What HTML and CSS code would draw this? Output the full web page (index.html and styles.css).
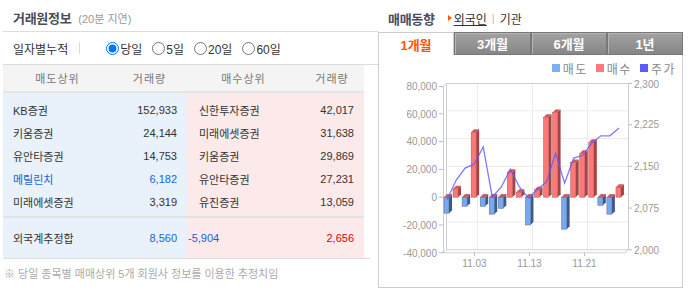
FILE: index.html
```html
<!DOCTYPE html>
<html lang="ko">
<head>
    <meta charset="UTF-8">
    <meta name="viewport" content="width=device-width, initial-scale=1.0">
    <title>거래원정보 · 매매동향</title>
    <link rel="stylesheet" href="styles.css">
</head>
<body>
    <div class="wrap">
        <div class="trade">
            <div class="panel-head">
                <h2>거래원정보</h2>
                <span class="delay">(20분 지연)</span>
            </div>

            <div class="filter">
                <span class="filter-label">일자별누적</span>
                <span class="divider"></span>
                <div class="options">
                    <label class="opt"><input type="radio" name="period" checked>당일</label>
                    <label class="opt"><input type="radio" name="period">5일</label>
                    <label class="opt"><input type="radio" name="period">20일</label>
                    <label class="opt"><input type="radio" name="period">60일</label>
                </div>
            </div>

            <div class="board">
                <div class="board-head">
                    <span>매도상위</span>
                    <span>거래량</span>
                    <span>매수상위</span>
                    <span>거래량</span>
                </div>

                <div class="board-body">
                    <div class="half sell">
                        <span class="name">KB증권</span><span class="num">152,933</span>
                        <span class="name">키움증권</span><span class="num">24,144</span>
                        <span class="name">유안타증권</span><span class="num">14,753</span>
                        <span class="name blue">메릴린치</span><span class="num blue">6,182</span>
                        <span class="name">미래에셋증권</span><span class="num">3,319</span>
                    </div>
                    <div class="half buy">
                        <span class="name">신한투자증권</span><span class="num">42,017</span>
                        <span class="name">미래에셋증권</span><span class="num">31,638</span>
                        <span class="name">키움증권</span><span class="num">29,869</span>
                        <span class="name">유안타증권</span><span class="num">27,231</span>
                        <span class="name">유진증권</span><span class="num">13,059</span>
                    </div>
                </div>

                <div class="board-total">
                    <div class="half sell">
                        <span class="name">외국계추정합</span><span class="num blue">8,560</span>
                    </div>
                    <div class="half buy">
                        <span class="name net blue">-5,904</span><span class="num red">2,656</span>
                    </div>
                </div>
            </div>

            <p class="note">※ 당일 종목별 매매상위 5개 회원사 정보를 이용한 추정치임</p>
        </div>

        <div class="trend">
            <div class="trend-head">
                <h2>매매동향</h2>
                <span class="arrow"></span>
                <a class="sub on" href="#">외국인</a>
                <span class="sep">|</span>
                <a class="sub" href="#">기관</a>
            </div>

            <div class="chart-box">
                <div class="tabs">
                    <span class="tab on">1개월</span>
                    <span class="tab wide">3개월</span>
                    <span class="tab">6개월</span>
                    <span class="tab">1년</span>
                </div>

                <div class="legend">
                    <span class="key"><i class="sq sell-sq"></i>매도</span>
                    <span class="key"><i class="sq buy-sq"></i>매수</span>
                    <span class="key"><i class="sq price-sq"></i>주가</span>
                </div>

                <svg class="chart" viewBox="379 81 303 206" width="303" height="206">
                    <!-- back wall -->
                    <g stroke="#ebebeb" stroke-width="1">
                        <line x1="446.5" y1="110.8" x2="628" y2="110.8"/>
                        <line x1="446.5" y1="138.6" x2="628" y2="138.6"/>
                        <line x1="446.5" y1="166.4" x2="628" y2="166.4"/>
                        <line x1="446.5" y1="194.2" x2="628" y2="194.2"/>
                        <line x1="446.5" y1="222" x2="628" y2="222"/>
                        <line x1="477.5" y1="83" x2="477.5" y2="249.8"/>
                        <line x1="532.5" y1="83" x2="532.5" y2="249.8"/>
                        <line x1="587.5" y1="83" x2="587.5" y2="249.8"/>
                    </g>
                    <g stroke="#cfcfcf" stroke-width="1" fill="none">
                        <polyline points="446.5,249.8 446.5,83.5 628,83.5"/>
                        <line x1="628.5" y1="83" x2="628.5" y2="250"/>
                        <line x1="446.5" y1="249.8" x2="628" y2="249.8"/>
                        <polyline points="446.5,83.5 443.5,86.5 443.5,252.8 625,252.8 628.5,249.8"/>
                        <line x1="446.5" y1="249.8" x2="443.5" y2="252.8"/>
                    </g>

                    <!-- axes -->
                    <g stroke="#bbb" stroke-width="1">
                        <line x1="439" y1="86.5" x2="443.5" y2="86.5"/>
                        <line x1="439" y1="113.8" x2="443.5" y2="113.8"/>
                        <line x1="439" y1="141.6" x2="443.5" y2="141.6"/>
                        <line x1="439" y1="169.4" x2="443.5" y2="169.4"/>
                        <line x1="439" y1="197.2" x2="443.5" y2="197.2"/>
                        <line x1="439" y1="225" x2="443.5" y2="225"/>
                        <line x1="439" y1="252.8" x2="443.5" y2="252.8"/>
                        <line x1="628.5" y1="83.5" x2="632" y2="83.5"/>
                        <line x1="628.5" y1="124.7" x2="632" y2="124.7"/>
                        <line x1="628.5" y1="166.4" x2="632" y2="166.4"/>
                        <line x1="628.5" y1="208.1" x2="632" y2="208.1"/>
                        <line x1="628.5" y1="249.8" x2="632" y2="249.8"/>
                        <line x1="474.5" y1="252.8" x2="474.5" y2="256"/>
                        <line x1="529.5" y1="252.8" x2="529.5" y2="256"/>
                        <line x1="584.5" y1="252.8" x2="584.5" y2="256"/>
                    </g>
                    <g class="axis-text" text-anchor="end">
                        <text x="437" y="90">80,000</text>
                        <text x="437" y="117.5">60,000</text>
                        <text x="437" y="145.3">40,000</text>
                        <text x="437" y="173">20,000</text>
                        <text x="437" y="201">0</text>
                        <text x="437" y="228.7">-20,000</text>
                        <text x="437" y="256.5">-40,000</text>
                    </g>
                    <g class="axis-text">
                        <text x="634" y="87.5">2,300</text>
                        <text x="634" y="128.4">2,225</text>
                        <text x="634" y="170">2,150</text>
                        <text x="634" y="211.8">2,075</text>
                        <text x="634" y="253.5">2,000</text>
                    </g>
                    <g class="axis-text" text-anchor="middle">
                        <text x="474.5" y="267">11.03</text>
                        <text x="529.5" y="267">11.13</text>
                        <text x="584.5" y="267">11.21</text>
                    </g>
                    <g id="bars"></g>
                    <polyline id="price" fill="none" stroke="#5a5aff" stroke-opacity="0.8" stroke-width="1.3"/>
                </svg>
            </div>
        </div>
    </div>

    <script>
        // 일별 순매수(천주)와 주가
        const net = [-11.5, 6, -6.5, 46.8, -6.5, -12.2, -8, 18, 3.6, -20,
                     5.3, 57.5, 61, -23, 25, 31.6, 39.5, -5.8, -12.2, 7.2];
        const price = [2090, 2125, 2147, 2154, 2185, 2095, 2113, 2145, 2113, 2093,
                       2109, 2122, 2174, 2120, 2165, 2170, 2192, 2205, 2205, 2219];

        const NS = 'http://www.w3.org/2000/svg';
        const bars = document.getElementById('bars');
        const zeroY = 197.2;
        const unit = 1.39;
        const RED = ['#ff7878', '#a04444', '#d35757', '#b84c4c'];
        const BLUE = ['#79a9ec', '#3e5b88', '#5d83c2', '#4a6a9c'];

        function add(tag, attrs) {
            const el = document.createElementNS(NS, tag);
            for (const k in attrs) el.setAttribute(k, attrs[k]);
            bars.appendChild(el);
            return el;
        }

        function cap(x, y, c) {
            add('polygon', { points: `${x},${y} ${x + 3},${y - 3} ${x + 8},${y - 3} ${x + 5},${y}`, fill: c[2] });
        }

        function bar(x, top, bottom, c) {
            add('polygon', { points: `${x + 5},${top} ${x + 8},${top - 3} ${x + 8},${bottom - 3} ${x + 5},${bottom}`, fill: c[1] });
            add('rect', { x: x, y: top, width: 5, height: bottom - top, fill: c[0], stroke: c[3], 'stroke-width': 0.5 });
            cap(x, top, c);
        }

        const pts = [];
        net.forEach((v, i) => {
            const x = 444 + i * 9.05;
            const y = zeroY - v * unit;
            if (v >= 0) {
                bar(x, y, zeroY, RED);
            } else {
                bar(x, zeroY, y, BLUE);
                cap(x, zeroY, RED);
            }
            const py = 249.8 - (price[i] - 2000) / 300 * 166.8;
            pts.push(`${(x + 3).toFixed(1)},${py.toFixed(1)}`);
        });
        document.getElementById('price').setAttribute('points', pts.join(' '));
    </script>
</body>
</html>
```

FILE: styles.css
```css
* {
    margin: 0;
    padding: 0;
    box-sizing: border-box;
}

body {
    font-family: "Liberation Sans", "Noto Sans CJK KR", sans-serif;
    font-size: 11px;
    color: #333;
    background: #fff;
}

.wrap {
    display: flex;
    width: 694px;
    height: 295px;
}

/* 거래원정보 */
.trade {
    width: 375px;
    margin-left: 3px;
}

.panel-head {
    height: 32px;
    border-bottom: 1px solid #ddd;
    display: flex;
    align-items: center;
    padding: 4px 0 0 10px;
}

.panel-head h2,
.trend-head h2 {
    font-size: 13px;
    font-weight: bold;
    color: #4b4b5c;
    letter-spacing: -0.3px;
}

.delay {
    font-size: 11px;
    color: #999;
    margin-left: 7px;
}

.filter {
    height: 33px;
    border-bottom: 1px solid #ddd;
    display: flex;
    align-items: center;
    padding-left: 10px;
    font-size: 12px;
    color: #333;
}

.divider {
    width: 1px;
    height: 12px;
    background: #ddd;
    margin-left: 11px;
}

.options {
    display: flex;
    align-items: center;
    gap: 10px;
    margin-left: 26px;
}

.opt {
    display: flex;
    align-items: center;
    gap: 1px;
}

.opt input {
    width: 13px;
    height: 13px;
    margin: 0;
}

.board {
    width: 361px;
}

.board-head {
    display: grid;
    grid-template-columns: 109px 75px 113px 64px;
    height: 28px;
    background: #f4f4f4;
    border-bottom: 2px solid #e6e6e6;
    color: #777;
    letter-spacing: 1px;
    font-size: 11px;
}

.board-head span {
    display: flex;
    align-items: center;
    justify-content: center;
}

.board-body,
.board-total {
    display: flex;
}

.board-body {
    border-bottom: 2px solid #e2e2e2;
}

.half {
    display: grid;
    grid-auto-rows: 23px;
    align-items: center;
}

.board-body .half {
    padding: 5px 0 3px;
}

.board-total .half {
    grid-auto-rows: 40px;
}

.sell {
    width: 184px;
    grid-template-columns: 109px 75px;
    background: #e9f1fb;
}

.buy {
    width: 177px;
    grid-template-columns: 113px 64px;
    background: #fbeae9;
}

.sell .name {
    padding-left: 10px;
}

.buy .name {
    padding-left: 12px;
}

.buy .name.net {
    padding-left: 1px;
}

.num {
    text-align: right;
    padding-right: 10px;
}

.blue {
    color: #1863d6;
}

.red {
    color: #e00000;
}

.note {
    width: 367px;
    border-top: 1px solid #ddd;
    padding: 9px 0 0 1px;
    color: #aaa;
    font-size: 11px;
    line-height: 13px;
}

/* 매매동향 */
.trend {
    width: 305px;
}

.trend-head {
    height: 32px;
    display: flex;
    align-items: center;
    padding: 4px 0 0 10px;
}

.arrow {
    width: 0;
    height: 0;
    border-left: 4px solid #ff5a00;
    border-top: 3px solid transparent;
    border-bottom: 3px solid transparent;
    margin-left: 13px;
}

.sub {
    font-size: 12px;
    color: #333;
    text-decoration: none;
}

.sub.on {
    margin-left: 2px;
    text-decoration: underline;
}

.sep {
    color: #bbb;
    margin: 0 5px;
}

.chart-box {
    height: 256px;
    border: 1px solid #ccc;
    border-top: 0;
}

.tabs {
    display: flex;
    height: 23px;
    margin: 0 -1px;
}

.tab {
    width: 76px;
    height: 23px;
    display: flex;
    align-items: center;
    justify-content: center;
    font-size: 13px;
    font-weight: bold;
    color: #fff;
    background: linear-gradient(#a2a2a2, #868686);
    border: 1px solid #777;
    box-shadow: inset 1px 1px 0 #b5b5b5;
}

.tab.wide {
    width: 77px;
}

.tab.on {
    background: #fff;
    color: #ff5400;
    border: 1px solid #ccc;
    border-bottom: 0;
    box-shadow: none;
}

.legend {
    height: 26px;
    display: flex;
    justify-content: flex-end;
    align-items: center;
    gap: 8px;
    padding-right: 6px;
    color: #888;
    font-size: 12px;
    letter-spacing: 1.5px;
}

.key {
    display: flex;
    align-items: center;
}

.sq {
    width: 8px;
    height: 8px;
    margin-right: 3px;
}

.sell-sq {
    background: #7eb0f0;
}

.buy-sq {
    background: #ff7b7b;
}

.price-sq {
    background: #5a5aff;
}

.chart {
    display: block;
    overflow: visible;
}

.axis-text {
    font-family: "Liberation Sans", sans-serif;
    font-size: 10px;
    fill: #999;
}
```
